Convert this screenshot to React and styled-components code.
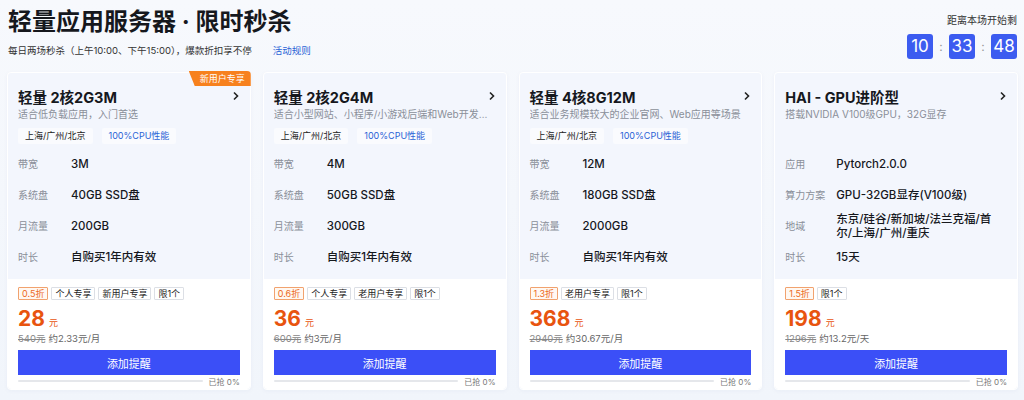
import React from "react";
import styled, { createGlobalStyle } from "styled-components";

const GlobalStyle = createGlobalStyle`
  body {
    margin: 0;
    background: #f3f6fb;
    font-family: Inter, "Noto Sans CJK SC", sans-serif;
    color: #1f2329;
  }
`;

const Page = styled.div`
  width: 1024px;
  height: 400px;
  box-sizing: border-box;
  padding: 0 6px 0 7px;
  background: linear-gradient(180deg, #f7f9fd 0%, #f1f5fb 100%);
  overflow: hidden;
`;

const Header = styled.div`
  display: flex;
  justify-content: space-between;
  align-items: flex-start;
  height: 72px;
`;

const HeadLeft = styled.div`
  padding-top: 5px;
  padding-left: 1px;
`;

const Title = styled.h1`
  margin: 0;
  font-size: 24px;
  line-height: 34px;
  font-weight: 700;
  color: #16181d;
`;

const SubTitle = styled.div`
  margin-top: 4px;
  font-size: 9.5px;
  line-height: 16px;
  color: #333;
  display: flex;
  gap: 21px;
`;

const RuleLink = styled.span`
  color: #2a63d6;
`;

const Countdown = styled.div`
  padding-top: 13px;
  padding-right: 1px;
  display: flex;
  flex-direction: column;
  align-items: flex-end;
`;

const CountLabel = styled.div`
  font-size: 10px;
  line-height: 14px;
  color: #333;
`;

const Clock = styled.div`
  margin-top: 7px;
  display: flex;
  align-items: center;
`;

const Digit = styled.div`
  width: 26px;
  height: 25px;
  border-radius: 3px;
  background: #3c5cf0;
  color: #fff;
  font-size: 17px;
  line-height: 25px;
  text-align: center;
`;

const Colon = styled.span`
  width: 16px;
  text-align: center;
  color: #999;
  font-size: 12px;
`;

const Grid = styled.div`
  display: grid;
  grid-template-columns: repeat(4, minmax(0, 1fr));
  gap: 12px;
`;

const Card = styled.div`
  position: relative;
  min-width: 0;
  border-radius: 4px;
  border: 1px solid #ffffff;
  box-shadow: 0 1px 4px rgba(30, 60, 120, 0.04);
`;

const Ribbon = styled.div`
  position: absolute;
  top: -2px;
  right: -1px;
  height: 15px;
  padding: 0 6px 0 11px;
  background: #f7811e;
  color: #fff;
  font-size: 9px;
  line-height: 15px;
  border-top-right-radius: 4px;
  clip-path: polygon(0 0, 100% 0, 100% 100%, 6px 100%);
`;

const Top = styled.div`
  background: #f3f6fd;
  padding: 13px 10px 7px;
  border-radius: 4px 4px 0 0;
`;

const NameRow = styled.div`
  display: flex;
  justify-content: space-between;
  align-items: center;
  height: 20px;
`;

const Name = styled.div`
  font-size: 14.5px;
  font-weight: 700;
  color: #16181d;
`;

const Desc = styled.div`
  font-size: 10px;
  line-height: 16px;
  color: #8a8f99;
  white-space: nowrap;
  overflow: hidden;
  text-overflow: ellipsis;
`;

const Chips = styled.div`
  display: flex;
  gap: 9px;
  height: 16px;
  margin-top: 6px;
`;

const Chip = styled.span`
  padding: 0 7px;
  font-size: 9px;
  line-height: 16px;
  background: #fafbfe;
  color: ${({ $blue }) => ($blue ? "#2a63d6" : "#222")};
  border-radius: 2px;
`;

const Specs = styled.div`
  margin-top: 4px;
`;

const Spec = styled.div`
  display: flex;
  align-items: center;
  min-height: 31px;
`;

const SpecLabel = styled.div`
  width: ${({ $w }) => $w}px;
  flex: none;
  font-size: 10px;
  color: #8a8f99;
`;

const SpecValue = styled.div`
  max-width: 166px;
  font-size: 11.5px;
  line-height: 14px;
  font-weight: 500;
  color: #16181d;
`;

const Bottom = styled.div`
  background: #fff;
  padding: 8px 10px 3px;
  border-radius: 0 0 4px 4px;
`;

const Badges = styled.div`
  display: flex;
  gap: 3px;
  height: 13px;
`;

const Badge = styled.span`
  padding: 0 3px;
  font-size: 9px;
  line-height: 11px;
  border: 1px solid ${({ $hot }) => ($hot ? "#f1a26e" : "#dcdfe5")};
  color: ${({ $hot }) => ($hot ? "#ec6a1c" : "#222")};
  background: ${({ $hot }) => ($hot ? "#fff8f2" : "#fff")};
  border-radius: 1px;
`;

const PriceRow = styled.div`
  margin-top: 6px;
  height: 26px;
  display: flex;
  align-items: baseline;
  color: #e8540f;
`;

const Price = styled.span`
  font-size: 21px;
  line-height: 26px;
  font-weight: 700;
`;

const Unit = styled.span`
  margin-left: 4px;
  font-size: 9px;
`;

const Orig = styled.div`
  height: 14px;
  font-size: 9.5px;
  line-height: 14px;
  color: #666;
`;

const Strike = styled.span`
  text-decoration: line-through;
  color: #888;
  margin-right: 3px;
`;

const Button = styled.button`
  display: block;
  width: 100%;
  height: 25px;
  margin-top: 4px;
  border: none;
  background: #3b4ff7;
  color: #fff;
  font-family: inherit;
  font-size: 11px;
  cursor: pointer;
`;

const Progress = styled.div`
  margin-top: 1px;
  height: 10px;
  display: flex;
  align-items: center;
  gap: 6px;
`;

const Track = styled.div`
  flex: 1;
  height: 2px;
  background: #e5e7eb;
  border-radius: 1px;
`;

const ProgressText = styled.span`
  font-size: 8px;
  color: #777;
`;

const Chevron = () => (
  <svg width="8" height="10" viewBox="0 0 8 10">
    <path d="M2 1.5 L5.5 5 L2 8.5" fill="none" stroke="#222" strokeWidth="1.6" />
  </svg>
);

const cards = [
  {
    name: "轻量 2核2G3M",
    desc: "适合低负载应用，入门首选",
    chips: true,
    ribbon: "新用户专享",
    labelW: 53,
    specs: [["带宽", "3M"], ["系统盘", "40GB SSD盘"], ["月流量", "200GB"], ["时长", "自购买1年内有效"]],
    off: "0.5折",
    badges: ["个人专享", "新用户专享", "限1个"],
    price: "28",
    orig: "540元",
    per: "约2.33元/月",
  },
  {
    name: "轻量 2核2G4M",
    desc: "适合小型网站、小程序/小游戏后端和Web开发测试",
    chips: true,
    labelW: 53,
    specs: [["带宽", "4M"], ["系统盘", "50GB SSD盘"], ["月流量", "300GB"], ["时长", "自购买1年内有效"]],
    off: "0.6折",
    badges: ["个人专享", "老用户专享", "限1个"],
    price: "36",
    orig: "600元",
    per: "约3元/月",
  },
  {
    name: "轻量 4核8G12M",
    desc: "适合业务规模较大的企业官网、Web应用等场景",
    chips: true,
    labelW: 53,
    specs: [["带宽", "12M"], ["系统盘", "180GB SSD盘"], ["月流量", "2000GB"], ["时长", "自购买1年内有效"]],
    off: "1.3折",
    badges: ["老用户专享", "限1个"],
    price: "368",
    orig: "2940元",
    per: "约30.67元/月",
  },
  {
    name: "HAI - GPU进阶型",
    desc: "搭载NVIDIA V100级GPU，32G显存",
    chips: false,
    labelW: 51,
    specs: [
      ["应用", "Pytorch2.0.0"],
      ["算力方案", "GPU-32GB显存(V100级)"],
      ["地域", "东京/硅谷/新加坡/法兰克福/首尔/上海/广州/重庆"],
      ["时长", "15天"],
    ],
    off: "1.5折",
    badges: ["限1个"],
    price: "198",
    orig: "1296元",
    per: "约13.2元/天",
  },
];

function ProductCard({ c }) {
  return (
    <Card>
      {c.ribbon && <Ribbon>{c.ribbon}</Ribbon>}
      <Top>
        <NameRow>
          <Name>{c.name}</Name>
          <Chevron />
        </NameRow>
        <Desc>{c.desc}</Desc>
        <Chips>
          {c.chips && (
            <>
              <Chip>上海/广州/北京</Chip>
              <Chip $blue>100%CPU性能</Chip>
            </>
          )}
        </Chips>
        <Specs>
          {c.specs.map(([k, v]) => (
            <Spec key={k}>
              <SpecLabel $w={c.labelW}>{k}</SpecLabel>
              <SpecValue>{v}</SpecValue>
            </Spec>
          ))}
        </Specs>
      </Top>
      <Bottom>
        <Badges>
          <Badge $hot>{c.off}</Badge>
          {c.badges.map((b) => (
            <Badge key={b}>{b}</Badge>
          ))}
        </Badges>
        <PriceRow>
          <Price>{c.price}</Price>
          <Unit>元</Unit>
        </PriceRow>
        <Orig>
          <Strike>{c.orig}</Strike>
          {c.per}
        </Orig>
        <Button>添加提醒</Button>
        <Progress>
          <Track />
          <ProgressText>已抢 0%</ProgressText>
        </Progress>
      </Bottom>
    </Card>
  );
}

export default function App() {
  return (
    <>
      <GlobalStyle />
      <Page>
        <Header>
          <HeadLeft>
            <Title>轻量应用服务器 · 限时秒杀</Title>
            <SubTitle>
              <span>每日两场秒杀（上午10:00、下午15:00），爆款折扣享不停</span>
              <RuleLink>活动规则</RuleLink>
            </SubTitle>
          </HeadLeft>
          <Countdown>
            <CountLabel>距离本场开始剩</CountLabel>
            <Clock>
              <Digit>10</Digit>
              <Colon>:</Colon>
              <Digit>33</Digit>
              <Colon>:</Colon>
              <Digit>48</Digit>
            </Clock>
          </Countdown>
        </Header>
        <Grid>
          {cards.map((c) => (
            <ProductCard key={c.name} c={c} />
          ))}
        </Grid>
      </Page>
    </>
  );
}
